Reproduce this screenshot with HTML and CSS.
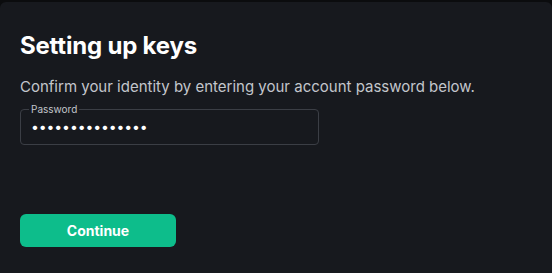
FILE: index.html
```html
<!DOCTYPE html>
<html>
<head>
<meta charset="utf-8">
<link rel="stylesheet" href="styles.css">
</head>
<body>
<div class="panel">
  <h1 class="title">Setting up keys</h1>
  <p class="desc">Confirm your identity by entering your account password below.</p>
  <fieldset class="field">
    <legend class="legend">Password</legend>
    <div class="dots">•••••••••••••••</div>
  </fieldset>
  <div class="actions">
    <button class="btn">Continue</button>
  </div>
</div>
</body>
</html>
```
FILE: styles.css
```css
html, body {
  margin: 0;
  padding: 0;
  background: #0b0c0e;
  height: 100%;
}
body {
  font-family: Inter, "Noto Sans", sans-serif;
}
.panel {
  margin-top: 2px;
  height: calc(100% - 2px);
  box-sizing: border-box;
  background: #17191e;
  border-radius: 6px 6px 0 0;
  padding: 29px 20px 0 20px;
}
.title {
  margin: 0;
  font-size: 24px;
  font-weight: 700;
  color: #ffffff;
  line-height: 30px;
  letter-spacing: -0.2px;
}
.desc {
  margin: 16px 0 0 0;
  font-size: 15px;
  line-height: 20px;
  color: #c3c6cc;
}
.field {
  margin: 7px 0 0 0;
  width: 299px;
  height: 41px;
  box-sizing: border-box;
  border: 1px solid #3b3e45;
  border-radius: 4px;
  padding: 4px 10px 0 10px;
  min-width: 0;
}
.legend {
  font-size: 10px;
  line-height: 10px;
  color: #c3c6cc;
  padding: 0 2px;
  margin-left: -2px;
}
.dots {
  color: #ffffff;
  font-size: 14px;
  letter-spacing: -0.1px;
  line-height: 18px;
}
.actions {
  margin-top: 69px;
}
.btn {
  width: 156px;
  height: 33px;
  border: none;
  border-radius: 6px;
  background: #0dbd8b;
  color: #ffffff;
  font-family: Inter, "Noto Sans", sans-serif;
  font-size: 14px;
  font-weight: 700;
  cursor: pointer;
}
```
